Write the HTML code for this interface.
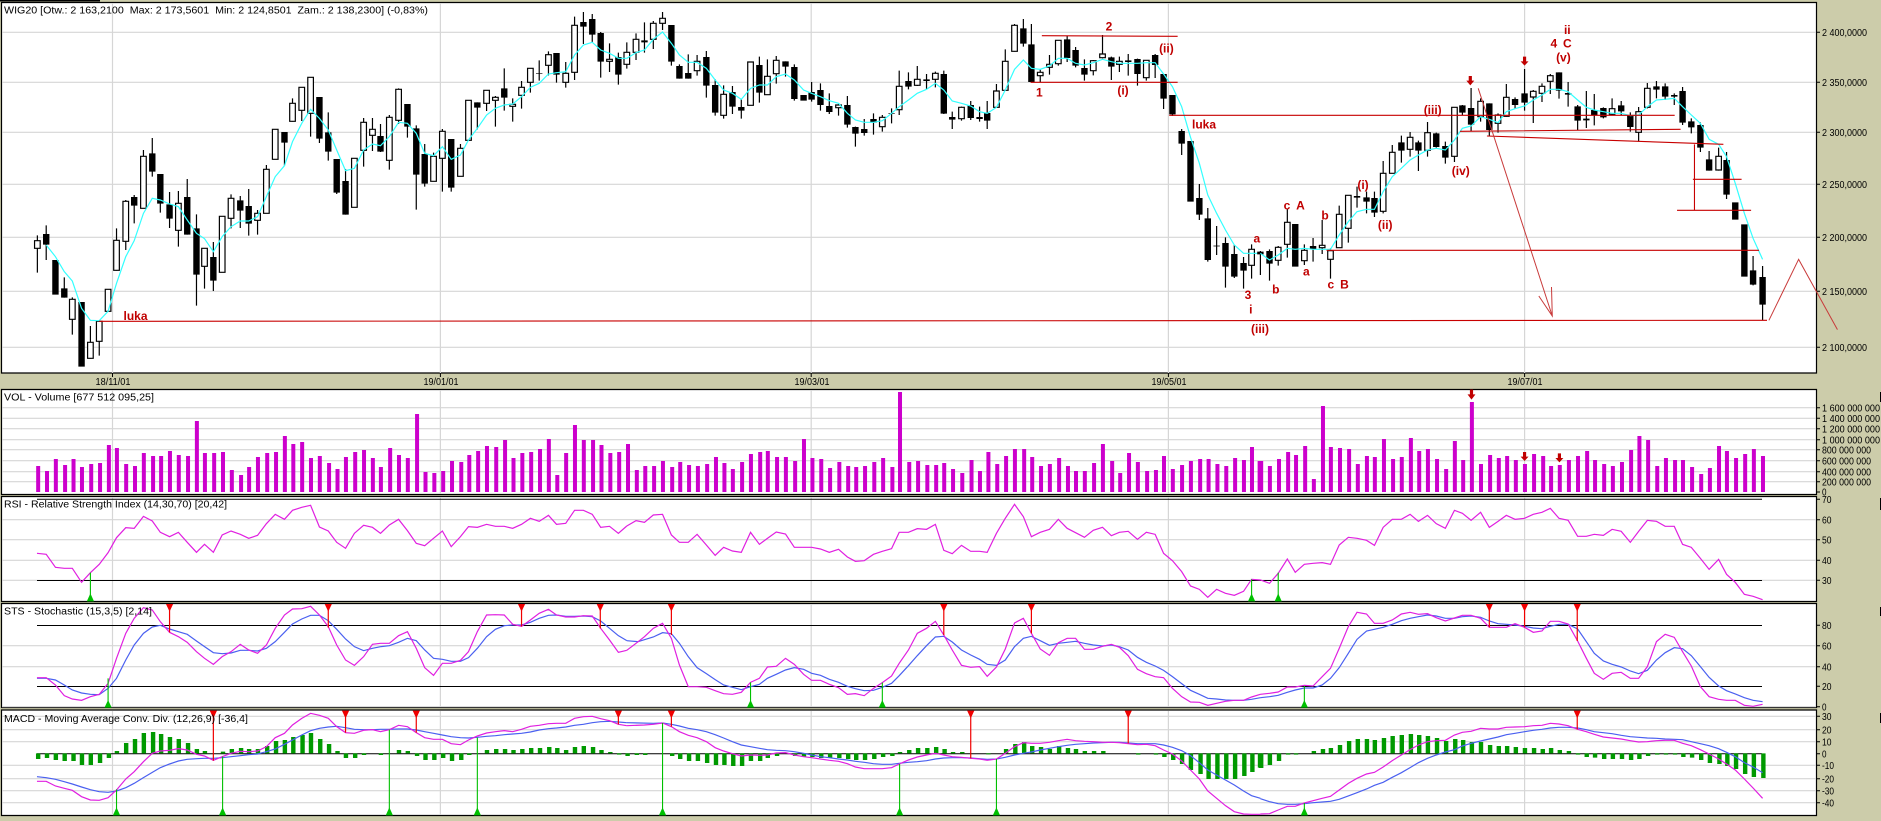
<!DOCTYPE html>
<html><head><meta charset="utf-8"><title>WIG20</title>
<style>
html,body{margin:0;padding:0;background:#ccccaa;width:1881px;height:821px;overflow:hidden}
svg{display:block;position:absolute;left:0;top:0}
text{font-family:"Liberation Sans",Arial,sans-serif;font-size:10px;fill:#000;white-space:pre}
.r text,text.r{font-size:12px;font-weight:bold;fill:#c00000;text-anchor:middle}
path,polyline,line,rect{vector-effect:non-scaling-stroke}
path,polyline{fill:none}
.w{stroke:#000;stroke-width:1.2}
.b{stroke:#000;stroke-width:6.4}
.o{fill:#fff;stroke:#000;stroke-width:1.2}
.m{stroke:#33ffff;stroke-width:1.2}
.v{stroke:#cc00cc;stroke-width:4}
.g{stroke:#009900;stroke-width:4.4}
.p{stroke:#e020e0;stroke-width:1.2}
.u{stroke:#4a60f0;stroke-width:1.2}
.sg{stroke:#00c000;stroke-width:1.1}
.sr{stroke:#f00000;stroke-width:1.2}
.tg{fill:#00c000}
.tr{fill:#f00000}
.ar{fill:#c00000}
.gr{stroke:#d6d6d6;stroke-width:1.2}
.bl{stroke:#000;stroke-width:1}
.rl{stroke:#c80000;stroke-width:1.1}
.ra{stroke:#c83a3a;stroke-width:1}
</style></head><body>
<svg width="1881" height="821" viewBox="0 0 1881 821" xmlns="http://www.w3.org/2000/svg">
<rect x="0" y="0" width="1881" height="821" fill="#ccccaa"/>
<rect x="0" y="0" width="100" height="1.5" fill="#000"/>
<rect x="1880" y="392" width="1" height="10" fill="#000"/>
<rect x="1880" y="498" width="1" height="12" fill="#000"/>
<rect x="1880" y="607" width="1" height="9" fill="#000"/>
<rect x="1880" y="713" width="1" height="10" fill="#000"/>
<g fill="#fff" stroke="#000" stroke-width="1.2">
<rect x="1.5" y="2.5" width="1815" height="370.5"/>
<rect x="1.5" y="389.5" width="1815" height="105"/>
<rect x="1.5" y="496.5" width="1815" height="105"/>
<rect x="1.5" y="603.5" width="1815" height="104"/>
<rect x="1.5" y="710" width="1815" height="105.5"/>
</g>
<path class="gr" d="M2 32.3H1816M2 82.3H1816M2 132.3H1816M2 184.3H1816M2 237.3H1816M2 291.3H1816M2 347.3H1816
M2 407.7H1816M2 418.3H1816M2 428.7H1816M2 439.7H1816M2 449.7H1816M2 460.7H1816M2 471.7H1816M2 481.7H1816
M2 519.7H1816M2 539.7H1816M2 560.3H1816M2 580.3H1816
M2 645.7H1816M2 666.7H1816M2 706.7H1816
M2 716.3H1816M2 729.7H1816M2 741.7H1816M2 765.3H1816M2 778.7H1816M2 790.7H1816M2 802.7H1816
M112.5 3V373M440.4 3V373M811.2 3V373M1168.4 3V373M1524.6 3V373
M112.5 390V494M440.4 390V494M811.2 390V494M1168.4 390V494M1524.6 390V494
M112.5 497V601M440.4 497V601M811.2 497V601M1168.4 497V601M1524.6 497V601
M112.5 604V707M440.4 604V707M811.2 604V707M1168.4 604V707M1524.6 604V707
M112.5 711V815M440.4 711V815M811.2 711V815M1168.4 711V815M1524.6 711V815"/>
<path class="bl" d="M37 499.3H1762M37 580.5H1762M37 625.5H1762M37 686.5H1762M37 753.7H1762"/>
<path class="bl" d="M1817 32.3h3M1817 82.3h3M1817 132.3h3M1817 184.3h3M1817 237.3h3M1817 291.3h3M1817 347.3h3M1817 407.7h3M1817 418.3h3M1817 428.7h3M1817 439.7h3M1817 449.7h3M1817 460.7h3M1817 471.7h3M1817 481.7h3M1817 492h3M1817 499.3h3M1817 519.7h3M1817 539.7h3M1817 560.3h3M1817 580.3h3M1817 625.3h3M1817 645.7h3M1817 666.7h3M1817 686.3h3M1817 706.7h3M1817 716.3h3M1817 729.7h3M1817 741.7h3M1817 753.7h3M1817 765.3h3M1817 778.7h3M1817 790.7h3M1817 802.7h3M112.5 373v4M440.4 373v4M811.2 373v4M1168.4 373v4M1524.6 373v4"/>

<!-- COLUMN 1 TOP -->
<g transform="scale(.4018,.33333)">
<path class="w" d="M93 706V818M115 676V780M160 832V893M180 892V1004M225 978V1076M247 962V1067M290 685V812M313 600V750M334 585V670M357 450V625M379 414V530M399 522V638M422 576V684M444 573V740M466 537V704M489 643V917M509 745V866M531 726V873M575 583V685M598 588V684M619 567V707M641 630V704M663 495V640M708 396V497M728 295V365M751 262V363M773 232V410M795 291V429M817 337V482M838 477V582M860 507V644M905 354V500M927 354V453M947 372V456M969 345V509M992 265V372M1014 312V413M1036 376V629M1057 432V560M1079 458V544M1101 387V575M1123 417V575M1146 432V529M1188 307V388M1211 270V333M1233 288V380M1255 205V332M1276 295V365M1298 243V326M1320 205V278M1342 181V242M1365 154V226M1385 159V248M1408 186V263M1430 50V240M1452 36V132M1474 42V128M1495 96V233M1517 130V216M1539 158V254M1560 127V206"/>
<path class="b" d="M115 702V734M138 780V884M160 865V893M203 906V1100M334 591V617M379 460V515M399 522V611M422 613V656M466 591V704M489 685V824M531 771V842M598 601V632M619 618V671M708 396V428M795 291V416M817 397V455M838 477V578M860 543V644M947 408V455M1014 312V380M1036 385V524M1057 462V551M1123 417V563M1188 307V323M1255 265V293M1385 159V224M1452 66V80M1474 57V104M1495 99V185M1539 171V224M1342 219V221"/>
<path class="o" d="M86 722h14V745h-14zM173 898h14V958h-14zM218 1027h14V1075h-14zM240 964h14V1024h-14zM262 868h14V934h-14zM283 721h14V811h-14zM306 604h14V724h-14zM350 469h14V625h-14zM437 610h14V691h-14zM502 745h14V799h-14zM546 649h14V817h-14zM568 595h14V655h-14zM634 640h14V661h-14zM656 508h14V640h-14zM678 388h14V478h-14zM721 310h14V364h-14zM744 262h14V331h-14zM766 232h14V340h-14zM875 475h14V622h-14zM898 367h14V451h-14zM920 388h14V406h-14zM962 352h14V481h-14zM985 268h14V361h-14zM1072 469h14V544h-14zM1094 394h14V475h-14zM1139 445h14V529h-14zM1159 301h14V421h-14zM1204 271h14V310h-14zM1226 292h14V301h-14zM1269 313h14V319h-14zM1291 262h14V286h-14zM1313 205h14V247h-14zM1358 164h14V196h-14zM1401 220h14V247h-14zM1423 76h14V217h-14zM1510 178h14V184h-14zM1553 157h14V193h-14z"/>
<polyline class="m" points="115,735 138,770 160,815 180,843 203,925 225,961 247,962 269,934 290,850 313,770 334,722 357,640 379,595 399,600 422,612 444,620 466,660 489,700 509,716 531,755 553,710 575,680 598,663 619,663 641,650 663,590 685,530 708,497 728,425 751,370 773,328 795,355 817,390 838,450 860,512 882,505 905,450 927,432 947,437 969,410 992,367 1014,370 1036,400 1057,460 1079,467 1101,440 1123,478 1146,465 1166,420 1188,385 1211,345 1233,325 1255,315 1276,312 1298,290 1320,262 1342,250 1365,222 1385,218 1408,215 1430,165 1452,135 1474,127 1495,150 1517,160 1539,175 1560,175"/>
</g>
<!-- COLUMN 2 TOP -->
<g transform="translate(630,0) scale(.4018,.33333)">
<path class="w" d="M15 100V180M36 67V158M58 63V147M81 36V90M103 75V197M123 193V236M145 163V236M167 165V227M190 153V293M212 238V347M233 256V356M255 258V342M277 296V356M322 170V308M342 178V284M364 168V251M387 184V230M409 193V302M452 246V305M474 250V332M496 280V342M519 312V347M541 288V383M561 380V440M583 357V407M606 340V404M628 345V395M651 325V370M670 212V345M693 217V268M715 198V258M738 222V268M760 215V262M781 212V342M802 335V387M825 320V362M848 303V360M870 320V365M889 303V387M912 252V323M934 148V272M957 72V155M979 57V140M999 72V246M1021 208V246M1044 165V224M1066 120V197M1088 108V186M1109 141V202M1131 178V242M1153 180V226M1176 105V175M1198 170V240M1218 170V216M1240 162V227M1263 176V257M1285 180V242M1307 162V234M1328 222V327M1350 285V348M1373 387V465M1417 552V660M1438 624V785M1460 678V765M1482 712V863M1504 735V834M1527 771V866M1547 733V836"/>
<path class="b" d="M36 121V127M103 75V185M123 198V236M145 219V236M190 171V257M212 255V338M255 276V320M277 321V332M322 195V278M387 184V200M409 201V297M432 285V302M452 276V299M474 270V315M496 318V336M541 315V374M561 381V401M583 387V399M606 357V368M651 340V342M693 243V260M738 238V243M781 222V341M802 351V359M848 315V354M870 351V357M889 339V362M979 85V131M999 133V246M1088 118V174M1109 150V197M1131 204V224M1198 172V200M1240 181V186M1263 177V222M1307 165V195M1328 222V296M1350 285V343M1373 393V431M1395 423V605M1417 594V644M1438 655V780M1460 737V739M1482 729V800M1504 762V830M1527 789V812"/>
<path class="o" d="M8 118h14V157h-14zM51 70h14V118h-14zM74 55h14V70h-14zM160 184h14V212h-14zM226 283h14V346h-14zM293 186h14V316h-14zM335 229h14V284h-14zM357 181h14V221h-14zM512 315h14V323h-14zM621 352h14V380h-14zM663 259h14V329h-14zM708 238h14V256h-14zM753 220h14V238h-14zM818 322h14V356h-14zM905 273h14V322h-14zM927 184h14V271h-14zM950 76h14V154h-14zM1014 217h14V227h-14zM1037 193h14V202h-14zM1059 121h14V191h-14zM1146 182h14V212h-14zM1169 162h14V173h-14zM1211 184h14V193h-14zM1278 181h14V233h-14zM1540 748h14V796h-14z"/>
<polyline class="m" points="-8,175 15,158 36,150 58,118 81,96 103,130 123,165 145,187 167,187 190,205 212,240 233,270 255,280 277,298 300,265 322,255 342,255 364,230 387,222 409,240 432,270 452,280 474,290 496,302 519,310 541,340 561,360 583,367 606,367 628,362 651,340 670,320 693,300 715,280 738,268 760,250 781,270 802,303 825,310 848,318 870,335 889,340 912,322 934,270 957,208 979,180 999,205 1021,208 1044,198 1066,175 1088,175 1109,190 1131,195 1153,188 1176,178 1198,185 1218,190 1240,190 1263,190 1285,188 1307,188 1328,222 1350,260 1373,320 1395,412 1417,490 1438,585 1460,640 1482,690 1504,735 1527,760 1547,760 1569,760"/>
</g>
<!-- COLUMN 3 TOP -->
<g transform="translate(1260,0) scale(.39605,.33333)">
<path class="w" d="M1 753V825M24 748V842M46 738V797M69 628V773M112 733V795M134 714V785M157 660V762M178 745V836M200 617V743M223 586V728M245 560V623M269 575V640M289 575V651M311 483V640M334 435V520M357 407V488M379 396V470M400 422V513M423 366V470M445 398V443M468 425V491M491 322V486M511 315V345M533 264V393M557 295V365M579 310V408M601 340V398M622 252V350M644 292V327M668 207V332M690 270V369M712 250V306M733 222V282M755 217V296M778 246V320M802 315V390M824 273V384M844 282V376M867 322V355M889 295V345M912 303V345M935 337V395M956 321V425M978 249V325M1001 243V295M1023 250V300M1046 280V315M1067 261V375M1089 355V400M1112 367V456M1134 453V512M1158 443V512M1178 456V597M1245 768V856M1269 798V960"/>
<path class="b" d="M1 755V763M24 753V791M89 672V800M134 738V747M245 588V593M269 592V605M289 594V638M357 427V452M400 427V452M445 400V441M468 438V473M511 316V338M533 324V374M579 310V390M644 297V315M668 280V308M755 217V272M778 279V284M802 319V362M824 356V361M844 330V345M867 324V352M912 316V334M935 346V381M1001 259V269M1023 259V290M1046 285V290M1067 273V368M1089 364V382M1112 375V443M1134 478V512M1178 480V584M1200 607V659M1223 673V830M1245 811V854M1269 831V914"/>
<path class="o" d="M39 742h14V781h-14zM62 667h14V733h-14zM105 751h14V782h-14zM150 736h14V743h-14zM171 752h14V778h-14zM193 643h14V743h-14zM216 586h14V685h-14zM304 520h14V634h-14zM327 457h14V520h-14zM372 412h14V448h-14zM416 398h14V451h-14zM484 322h14V469h-14zM550 304h14V350h-14zM594 345h14V370h-14zM615 292h14V349h-14zM683 274h14V291h-14zM705 259h14V280h-14zM726 227h14V244h-14zM882 326h14V343h-14zM949 335h14V397h-14zM971 265h14V322h-14zM1151 469h14V510h-14z"/>
<polyline class="m" points="1,760 24,780 46,765 69,745 89,748 112,745 134,748 157,748 178,748 200,705 223,665 245,635 269,628 289,628 311,575 334,530 357,505 379,480 400,465 423,450 445,445 468,450 491,420 511,385 533,378 557,350 579,358 601,368 622,335 644,326 668,318 690,300 712,285 733,268 755,268 778,275 802,300 824,322 844,330 867,335 889,340 912,340 935,347 956,345 978,320 1001,300 1023,298 1046,295 1067,320 1089,345 1112,370 1134,418 1158,433 1178,470 1200,550 1223,640 1245,715 1269,778"/>
<path class="rl" d="M168 751H1260M505 394L1062 388M573 408L1170 433M1097 433V631M1093 538H1216M1053 631H1240"/>
<path class="ra" d="M551 265L738 948M704 888L738 948L736 861M1285 961L1360 778L1458 989"/>
<path class="ar" d="M527 228h8v14h6l-10 14-10-14h6zM664 170h8v14h6l-10 13-10-13h6z"/>
</g>
<g transform="translate(630,0) scale(.4018,.33333)">
<path class="rl" d="M1025 107L1363 109M997 247H1363M1342 346H2600"/>
</g>
<path class="rl" d="M99 321.3L1767 320.3"/>

<!-- VOLUME -->
<g transform="translate(0,385) scale(.4018,.33333)">
<path class="v" d="M95 321V243M117 321V258M139 321V222M162 321V240M183 321V222M204 321V246M227 321V237M249 321V234M271 321V180M291 321V189M314 321V237M336 321V243M358 321V204M381 321V213M401 321V213M423 321V198M445 321V210M468 321V213M490 321V108M510 321V204M533 321V204M555 321V201M577 321V255M600 321V270M620 321V246M642 321V216M665 321V204M687 321V201M709 321V153M730 321V177M752 321V171M774 321V219M796 321V213M819 321V234M840 321V252M861 321V216M884 321V201M906 321V195M928 321V219M948 321V246M971 321V189M993 321V210M1015 321V219M1038 321V87M1059 321V261M1081 321V264M1103 321V258M1125 321V228M1148 321V231M1168 321V210M1190 321V198M1212 321V183M1235 321V186M1257 321V165M1278 321V219M1300 321V204M1322 321V201M1344 321V192M1366 321V162M1387 321V270M1409 321V204M1431 321V120M1453 321V165M1476 321V165M1497 321V180M1519 321V204M1541 321V201M1563 321V177"/>
<polyline class="p" points="92,505 115,508 138,547 160,550 180,550 203,592 225,563 247,538 269,503 290,458 313,428 334,430 357,394 379,408 399,442 422,455 444,442 466,472 489,502 509,478 531,502 553,450 575,438 598,448 619,460 641,451 663,416 685,388 708,403 728,376 751,367 773,361 795,426 817,438 838,472 860,490 882,445 905,421 927,427 947,445 969,420 992,403 1014,437 1036,475 1057,482 1079,460 1101,438 1123,485 1146,455 1166,425 1188,427 1211,418 1233,424 1255,424 1276,430 1298,418 1320,400 1342,409 1365,391 1385,418 1408,415 1430,376 1452,376 1474,388 1495,427 1517,424 1539,445 1560,423"/>
<path class="sg" d="M225 563V640"/><path class="tg" d="M225 625l9 24h-18z"/>
<polyline class="u" points="92,880 115,880 138,885 160,900 180,915 203,924 225,928 247,929 269,910 290,880 313,825 334,780 357,745 379,726 399,721 422,732 444,740 466,748 489,768 509,785 531,803 553,806 575,804 598,796 619,796 641,798 663,790 685,770 708,742 728,717 751,702 773,691 795,691 817,707 838,733 860,762 882,785 905,797 927,790 947,785 969,782 992,772 1014,760 1036,767 1057,795 1079,820 1101,823 1123,829 1146,829 1166,818 1188,790 1211,755 1233,733 1255,722 1276,720 1298,720 1320,712 1342,700 1365,691 1385,690 1408,694 1430,694 1452,693 1474,695 1495,708 1517,730 1539,752 1560,767"/>
<polyline class="p" points="92,878 115,878 138,900 160,932 180,942 203,946 225,935 247,928 269,895 290,820 313,745 334,700 357,668 379,675 399,710 422,742 444,755 466,772 489,800 509,820 531,838 553,815 575,800 598,778 619,795 641,805 663,780 685,730 708,690 728,672 751,671 773,664 795,690 817,725 838,780 860,825 882,841 905,815 927,778 947,775 969,775 992,752 1014,740 1036,790 1057,848 1079,871 1101,835 1123,835 1146,826 1166,800 1188,740 1211,690 1233,689 1255,690 1276,718 1298,724 1320,705 1342,685 1365,673 1385,690 1408,696 1430,696 1452,692 1474,693 1495,730 1517,765 1539,802 1560,796"/>
<path class="sg" d="M269 880V955"/><path class="tg" d="M269 945l9 23h-18z"/>
<path class="sr" d="M422 665V742M817 665V728M1298 665V724M1494 665V730"/>
<path class="tr" d="M413 657h18l-9 23zM808 657h18l-9 23zM1289 657h18l-9 23zM1485 657h18l-9 23z"/>
<path class="g" d="M95 1105V1122M117 1105V1119M139 1105V1125M161 1105V1128M183 1105V1128M204 1105V1140M226 1105V1140M249 1105V1134M271 1105V1119M291 1105V1098M314 1105V1074M336 1105V1062M358 1105V1044M381 1105V1041M401 1105V1047M423 1105V1056M445 1105V1062M468 1105V1074M490 1105V1092M510 1105V1098M555 1105V1100M577 1105V1092M600 1105V1089M620 1105V1092M642 1105V1092M665 1105V1083M687 1105V1068M709 1105V1065M730 1105V1056M753 1105V1050M774 1105V1044M797 1105V1062M819 1105V1077M840 1105V1098M861 1105V1119M884 1105V1119M906 1105V1110M948 1105V1110M993 1105V1095M1015 1105V1098M1038 1105V1113M1059 1105V1125M1081 1105V1125M1103 1105V1119M1125 1105V1128M1148 1105V1125M1168 1105V1110M1212 1105V1095M1235 1105V1092M1257 1105V1092M1278 1105V1095M1300 1105V1092M1322 1105V1089M1344 1105V1089M1367 1105V1086M1387 1105V1089M1409 1105V1095M1431 1105V1086M1453 1105V1083M1476 1105V1086M1497 1105V1095M1519 1105V1101M1541 1105V1109M1562 1105V1113"/>
<polyline class="u" points="92,1175 115,1178 138,1183 160,1190 180,1197 203,1206 225,1214 247,1220 269,1222 290,1218 313,1208 334,1195 357,1178 379,1162 399,1148 422,1137 444,1128 466,1123 489,1121 509,1120 531,1120 553,1118 575,1115 598,1112 619,1109 641,1107 663,1100 685,1092 708,1078 728,1065 751,1050 773,1037 795,1030 817,1026 838,1024 860,1028 882,1033 905,1034 927,1034 947,1033 969,1033 992,1032 1014,1032 1036,1035 1057,1040 1079,1045 1101,1050 1123,1055 1146,1058 1166,1059 1188,1057 1211,1054 1233,1052 1255,1049 1276,1047 1298,1045 1320,1041 1342,1035 1365,1031 1385,1029 1408,1026 1430,1021 1452,1018 1474,1013 1495,1010 1517,1009 1539,1011 1560,1013"/>
<polyline class="p" points="92,1189 115,1189 138,1203 160,1210 180,1216 203,1235 225,1245 247,1246 269,1238 290,1215 313,1182 334,1160 357,1130 379,1105 399,1098 422,1096 444,1091 466,1095 489,1108 509,1113 531,1126 553,1115 575,1105 598,1099 619,1100 641,1098 663,1085 685,1058 708,1045 728,1020 751,1000 773,985 795,991 817,1000 838,1025 860,1043 882,1045 905,1036 927,1034 947,1040 969,1034 992,1021 1014,1025 1036,1043 1057,1058 1079,1063 1101,1063 1123,1076 1146,1079 1166,1065 1188,1053 1211,1044 1233,1040 1255,1037 1276,1040 1298,1033 1320,1024 1342,1021 1365,1016 1385,1015 1408,1015 1430,1000 1452,995 1474,994 1495,1001 1517,1007 1539,1018 1560,1022"/>
<path class="sg" d="M290 1213V1280M554 1115V1280M969 1034V1280M1188 1058V1280"/>
<path class="tg" d="M290 1267l9 24h-18zM554 1267l9 24h-18zM969 1267l9 24h-18zM1188 1267l9 24h-18z"/>
<path class="sr" d="M531 985V1127M860 985V1043M1036 985V1043M1539 985V1018"/>
<path class="tr" d="M522 977h18l-9 23zM851 977h18l-9 23zM1027 977h18l-9 23zM1530 977h18l-9 23z"/>
</g>
<!-- COLUMN 2 BOTTOM -->
<g transform="translate(630,385) scale(.4018,.33333)">
<path class="v" d="M17 321V255M38 321V243M60 321V243M82 321V228M105 321V246M125 321V231M147 321V240M169 321V243M192 321V237M214 321V216M235 321V234M256 321V252M279 321V231M301 321V207M324 321V201M343 321V198M366 321V216M388 321V216M411 321V228M433 321V162M454 321V219M476 321V222M498 321V249M521 321V231M543 321V243M563 321V246M585 321V243M608 321V231M630 321V219M653 321V246M672 321V21M695 321V231M717 321V228M740 321V240M762 321V240M782 321V234M804 321V252M827 321V264M850 321V225M871 321V258M892 321V201M914 321V237M936 321V213M958 321V192M981 321V192M1001 321V216M1023 321V243M1045 321V237M1068 321V219M1090 321V243M1110 321V258M1132 321V258M1155 321V234M1177 321V177M1200 321V228M1220 321V264M1242 321V204M1264 321V231M1287 321V258M1309 321V255M1329 321V213M1351 321V252M1374 321V240M1396 321V228M1419 321V222M1440 321V222M1462 321V237M1484 321V243M1506 321V219M1528 321V225M1548 321V186M1567 321V228"/>
<polyline class="p" points="-8,423 15,407 36,412 58,390 81,388 103,450 123,472 145,472 167,448 190,480 212,511 233,487 255,498 277,502 300,442 322,478 342,460 364,441 387,447 409,487 432,487 452,487 474,492 496,502 519,493 541,516 561,529 583,527 606,508 628,499 651,491 670,442 693,442 715,431 738,433 760,418 781,496 802,506 825,481 848,499 870,499 889,502 912,445 934,400 957,358 979,395 999,455 1021,442 1044,433 1066,403 1088,430 1109,443 1131,457 1153,436 1176,427 1198,452 1218,442 1240,439 1263,463 1285,442 1307,448 1328,505 1350,527 1373,560 1395,603 1417,613 1438,637 1460,613 1482,625 1504,631 1527,619 1547,583 1569,585"/>
<path class="sg" d="M1547 583V640"/><path class="tg" d="M1547 625l9 24h-18z"/>
<polyline class="u" points="-8,767 20,770 58,756 81,743 103,746 123,775 145,815 167,848 190,866 212,884 233,900 255,907 277,914 300,905 322,898 342,880 364,868 387,855 409,848 432,853 452,865 474,871 496,883 519,892 541,904 561,911 583,917 606,916 628,907 651,895 670,872 693,842 715,812 738,782 760,756 781,754 802,771 825,795 848,810 870,823 889,838 912,841 934,825 957,785 979,760 999,754 1021,767 1044,781 1066,775 1088,772 1109,769 1131,775 1153,780 1176,783 1198,780 1218,785 1240,795 1263,817 1285,832 1307,843 1328,856 1350,875 1373,896 1395,916 1417,928 1438,940 1460,942 1482,945 1504,946 1527,946 1547,943 1569,938"/>
<polyline class="p" points="-8,796 15,775 36,755 58,730 81,715 103,760 123,840 145,905 167,905 190,907 212,917 233,926 255,928 277,922 300,892 322,880 342,846 364,844 387,820 409,838 432,868 452,886 474,886 496,898 519,908 541,928 561,926 583,932 606,910 628,893 651,873 670,835 693,795 715,745 738,730 760,709 781,750 802,795 825,841 848,847 870,845 889,874 912,846 934,792 957,714 979,700 999,745 1021,792 1044,811 1066,773 1088,760 1109,760 1131,793 1153,793 1176,784 1198,778 1218,787 1240,812 1263,853 1285,866 1307,875 1328,878 1350,910 1373,935 1395,951 1417,952 1438,961 1460,955 1482,949 1504,946 1527,946 1547,936 1569,928"/>
<path class="sg" d="M300 892V955M628 893V955"/><path class="tg" d="M300 945l9 23h-18zM628 945l9 23h-18z"/>
<path class="sr" d="M103 665V750M781 665V750M999 665V745"/>
<path class="tr" d="M94 657h18l-9 23zM772 657h18l-9 23zM990 657h18l-9 23z"/>
<path class="g" d="M17 1105V1110M38 1105V1110M105 1105V1113M125 1105V1122M147 1105V1128M169 1105V1128M192 1105V1134M214 1105V1140M235 1105V1140M257 1105V1143M279 1105V1143M301 1105V1128M324 1105V1128M343 1105V1119M366 1105V1113M411 1105V1113M433 1105V1116M454 1105V1116M476 1105V1119M498 1105V1119M521 1105V1119M543 1105V1122M563 1105V1125M585 1105V1125M608 1105V1122M630 1105V1116M653 1105V1113M672 1105V1101M695 1105V1095M717 1105V1089M740 1105V1089M762 1105V1086M783 1105V1092M804 1105V1101M827 1105V1101M892 1105V1108M936 1105V1092M959 1105V1077M981 1105V1071M1001 1105V1083M1023 1105V1086M1045 1105V1092M1068 1105V1083M1090 1105V1089M1110 1105V1092M1132 1105V1098M1155 1105V1098M1178 1105V1098M1265 1105V1109M1309 1105V1109M1330 1105V1116M1352 1105V1125M1374 1105V1137M1396 1105V1155M1420 1105V1167M1440 1105V1182M1462 1105V1182M1484 1105V1182M1506 1105V1182M1529 1105V1173M1549 1105V1161M1568 1105V1148"/>
<polyline class="u" points="-8,1013 58,1015 81,1014 103,1018 123,1023 145,1030 167,1034 190,1040 212,1049 233,1059 255,1070 277,1080 300,1085 322,1090 342,1094 364,1096 387,1097 409,1100 432,1105 452,1110 474,1115 496,1118 519,1122 541,1125 561,1129 583,1132 606,1136 628,1138 651,1138 670,1135 693,1132 715,1130 738,1127 760,1122 781,1119 802,1118 825,1118 848,1119 870,1121 889,1123 912,1122 934,1117 957,1110 979,1105 999,1101 1021,1095 1044,1090 1066,1085 1088,1081 1109,1078 1131,1076 1153,1074 1176,1073 1198,1072 1218,1072 1240,1074 1263,1076 1285,1076 1307,1076 1328,1080 1350,1087 1373,1097 1395,1112 1417,1133 1438,1155 1460,1170 1482,1185 1504,1200 1527,1218 1547,1232 1569,1240"/>
<polyline class="p" points="-8,1022 36,1020 58,1018 81,1014 103,1025 123,1040 145,1051 167,1058 190,1070 212,1088 233,1098 255,1106 277,1113 300,1110 322,1111 342,1110 364,1104 387,1103 409,1110 432,1115 452,1118 474,1122 496,1126 519,1129 541,1136 561,1146 583,1151 606,1151 628,1151 651,1148 670,1137 693,1125 715,1116 738,1110 760,1105 781,1110 802,1115 825,1117 848,1120 870,1122 889,1126 912,1122 934,1105 957,1085 979,1073 999,1075 1021,1075 1044,1072 1066,1067 1088,1063 1109,1067 1131,1069 1153,1070 1176,1072 1198,1072 1218,1073 1240,1076 1263,1079 1285,1078 1307,1082 1328,1095 1350,1107 1373,1128 1395,1155 1417,1182 1438,1218 1460,1240 1482,1262 1504,1280 1527,1287 1547,1288 1569,1288"/>
<path class="sg" d="M81 1014V1280M671 1137V1280M912 1122V1280"/>
<path class="tg" d="M81 1267l9 24h-18zM671 1267l9 24h-18zM912 1267l9 24h-18z"/>
<path class="sr" d="M103 985V1025M848 985V1120M1240 985V1075"/>
<path class="tr" d="M94 977h18l-9 23zM839 977h18l-9 23zM1231 977h18l-9 23z"/>
</g>
<!-- COLUMN 3 BOTTOM -->
<g transform="translate(1260,385) scale(.39605,.33333)">
<path class="v" d="M3 321V228M25 321V243M48 321V222M71 321V201M91 321V210M114 321V183M136 321V282M159 321V63M179 321V186M202 321V189M225 321V192M247 321V237M270 321V213M290 321V216M313 321V162M336 321V222M358 321V216M381 321V159M402 321V198M424 321V192M447 321V222M470 321V252M492 321V168M513 321V225M535 321V51M558 321V237M581 321V210M603 321V219M624 321V213M646 321V225M669 321V237M692 321V207M715 321V213M735 321V243M757 321V240M780 321V225M803 321V213M826 321V198M846 321V225M869 321V237M891 321V243M914 321V231M937 321V195M958 321V153M980 321V165M1003 321V243M1025 321V219M1048 321V225M1068 321V225M1091 321V246M1114 321V267M1136 321V249M1159 321V183M1179 321V198M1202 321V219M1225 321V207M1247 321V192M1270 321V213"/>
<path class="ar" d="M530 14h8v14h6l-10 16-10-16h6zM664 201h8v14h6l-10 13-10-13h6zM752 205h8v14h6l-10 13-10-13h6z"/>
<polyline class="p" points="1,585 24,595 46,565 69,522 89,562 112,538 134,535 157,533 178,538 200,480 223,457 245,460 269,466 289,481 311,427 334,403 357,403 379,388 400,409 423,391 445,416 468,430 491,376 511,385 533,406 557,382 579,427 601,409 622,391 644,403 668,400 690,388 712,382 733,370 755,400 778,406 802,454 824,454 844,448 867,451 889,433 912,439 935,472 956,439 978,406 1001,409 1023,424 1046,424 1067,478 1089,487 1112,520 1134,553 1158,523 1178,568 1200,592 1223,628 1245,634 1269,644"/>
<path class="sg" d="M46 563V640"/><path class="tg" d="M46 625l9 24h-18z"/>
<polyline class="u" points="1,938 24,935 46,931 69,922 89,915 112,909 134,909 157,900 178,880 200,848 223,805 245,763 269,738 289,733 311,727 334,718 357,707 379,700 400,695 423,690 445,693 468,700 491,700 511,695 533,693 557,697 579,708 601,716 622,718 644,720 668,724 690,729 712,731 733,724 755,718 778,718 802,732 824,770 844,805 867,828 889,838 912,846 935,858 956,866 978,856 1001,825 1023,803 1046,788 1067,791 1089,812 1112,845 1134,877 1158,903 1178,917 1200,927 1223,938 1245,946 1269,950"/>
<polyline class="p" points="1,928 24,925 46,921 69,906 89,906 112,901 134,903 157,875 178,850 200,790 223,725 245,682 269,687 289,715 311,715 334,705 357,687 379,682 400,688 423,686 445,698 468,708 491,699 511,691 533,691 557,700 579,727 601,727 622,727 644,716 668,727 690,742 712,738 733,709 755,709 778,717 802,768 824,820 844,865 867,883 889,865 912,862 935,880 956,880 978,845 1001,770 1023,748 1046,757 1067,800 1089,843 1112,905 1134,935 1158,943 1178,946 1200,946 1223,961 1245,964 1269,958"/>
<path class="sg" d="M112 903V955"/><path class="tg" d="M112 945l9 23h-18z"/>
<path class="sr" d="M579 665V727M668 665V727M801 665V768"/>
<path class="tr" d="M570 657h18l-9 23zM659 657h18l-9 23zM792 657h18l-9 23z"/>
<path class="g" d="M3 1105V1149M25 1105V1140M48 1105V1128M71 1105V1109M91 1105V1109M136 1105V1098M159 1105V1092M179 1105V1089M202 1105V1080M225 1105V1068M247 1105V1062M270 1105V1062M290 1105V1065M313 1105V1059M335 1105V1053M358 1105V1050M381 1105V1047M402 1105V1050M424 1105V1053M447 1105V1059M470 1105V1068M493 1105V1062M513 1105V1065M535 1105V1071M558 1105V1071M581 1105V1080M603 1105V1083M624 1105V1083M646 1105V1086M669 1105V1089M692 1105V1089M714 1105V1092M735 1105V1089M757 1105V1095M780 1105V1098M803 1105V1109M825 1105V1116M846 1105V1118M869 1105V1122M891 1105V1122M914 1105V1122M937 1105V1125M958 1105V1122M980 1105V1113M1003 1105V1109M1025 1105V1109M1048 1105V1109M1069 1105V1116M1091 1105V1118M1114 1105V1125M1136 1105V1134M1160 1105V1137M1180 1105V1143M1202 1105V1152M1225 1105V1167M1247 1105V1176M1271 1105V1179"/>
<polyline class="u" points="1,1241 24,1250 46,1256 69,1258 89,1258 112,1256 134,1253 157,1251 178,1249 200,1243 223,1233 245,1223 269,1212 289,1201 311,1192 334,1177 357,1163 379,1148 400,1133 423,1120 445,1110 468,1101 491,1094 511,1083 533,1075 557,1068 579,1062 601,1056 622,1049 644,1045 668,1040 690,1036 712,1033 733,1029 755,1027 778,1027 802,1029 824,1034 844,1040 867,1043 889,1046 912,1051 935,1055 956,1057 978,1059 1001,1060 1023,1062 1046,1063 1067,1064 1089,1070 1112,1076 1134,1082 1158,1091 1178,1102 1200,1115 1223,1133 1245,1146 1269,1163"/>
<polyline class="p" points="1,1287 24,1286 46,1275 69,1264 89,1264 112,1254 134,1247 157,1240 178,1234 200,1215 223,1195 245,1180 269,1167 289,1162 311,1146 334,1127 357,1110 379,1094 400,1080 423,1070 445,1067 468,1066 491,1050 511,1042 533,1039 557,1030 579,1032 601,1032 622,1027 644,1026 668,1025 690,1022 712,1021 733,1015 755,1017 778,1022 802,1033 824,1040 844,1048 867,1056 889,1059 912,1062 935,1067 956,1071 978,1070 1001,1067 1023,1066 1046,1066 1067,1075 1089,1082 1112,1094 1134,1107 1158,1122 1178,1137 1200,1155 1223,1182 1245,1209 1269,1240"/>
<path class="sg" d="M112 1254V1280"/><path class="tg" d="M112 1267l9 24h-18z"/>
<path class="sr" d="M801 985V1033"/><path class="tr" d="M792 977h18l-9 23z"/>
</g>

<!-- ANNOTATIONS -->
<g class="r">
<text x="135.5" y="320">luka</text>
<text x="1204" y="128.3">luka</text>
<text x="1109" y="30.7">2</text>
<text x="1166.4" y="52.3">(ii)</text>
<text x="1039.4" y="96.7">1</text>
<text x="1123" y="94.3">(i)</text>
<text x="1248" y="299">3</text>
<text x="1250.8" y="313.7">i</text>
<text x="1260" y="333">(iii)</text>
<text x="1256.8" y="242.3">a</text>
<text x="1567.3" y="34">ii</text>
<text x="1553.9" y="47.7">4</text>
<text x="1567.3" y="47.7">C</text>
<text x="1563.4" y="61.3">(v)</text>
<text x="1432.7" y="114">(iii)</text>
<text x="1460.8" y="175">(iv)</text>
<text x="1363" y="189">(i)</text>
<text x="1385.2" y="229">(ii)</text>
<text x="1287" y="209.7">c</text>
<text x="1300.4" y="209.7">A</text>
<text x="1325" y="219.7">b</text>
<text x="1306.3" y="275.7">a</text>
<text x="1275.8" y="293.7">b</text>
<text x="1330.9" y="288.7">c</text>
<text x="1344.4" y="288.7">B</text>
</g>

<!-- PANEL LABELS -->
<text x="4" y="13.5" textLength="424" lengthAdjust="spacingAndGlyphs">WIG20 [Otw.: 2 163,2100  Max: 2 173,5601  Min: 2 124,8501  Zam.: 2 138,2300] (-0,83%)</text>
<text x="4" y="400.7" textLength="150" lengthAdjust="spacingAndGlyphs">VOL - Volume [677 512 095,25]</text>
<text x="4" y="507.7" textLength="223" lengthAdjust="spacingAndGlyphs">RSI - Relative Strength Index (14,30,70) [20,42]</text>
<text x="4" y="614.7" textLength="148" lengthAdjust="spacingAndGlyphs">STS - Stochastic (15,3,5) [2,14]</text>
<text x="4" y="722" textLength="244" lengthAdjust="spacingAndGlyphs">MACD - Moving Average Conv. Div. (12,26,9) [-36,4]</text>

<!-- DATES -->
<g text-anchor="middle">
<text x="113" y="385" textLength="35" lengthAdjust="spacingAndGlyphs">18/11/01</text>
<text x="441" y="385" textLength="35" lengthAdjust="spacingAndGlyphs">19/01/01</text>
<text x="812" y="385" textLength="35" lengthAdjust="spacingAndGlyphs">19/03/01</text>
<text x="1169" y="385" textLength="35" lengthAdjust="spacingAndGlyphs">19/05/01</text>
<text x="1525" y="385" textLength="35" lengthAdjust="spacingAndGlyphs">19/07/01</text>
</g>

<!-- AXES -->
<g>
<text x="1822" y="36" textLength="45" lengthAdjust="spacingAndGlyphs">2 400,0000</text>
<text x="1822" y="86" textLength="45" lengthAdjust="spacingAndGlyphs">2 350,0000</text>
<text x="1822" y="136" textLength="45" lengthAdjust="spacingAndGlyphs">2 300,0000</text>
<text x="1822" y="188" textLength="45" lengthAdjust="spacingAndGlyphs">2 250,0000</text>
<text x="1822" y="241" textLength="45" lengthAdjust="spacingAndGlyphs">2 200,0000</text>
<text x="1822" y="295" textLength="45" lengthAdjust="spacingAndGlyphs">2 150,0000</text>
<text x="1822" y="351" textLength="45" lengthAdjust="spacingAndGlyphs">2 100,0000</text>
<text x="1822" y="411.4" textLength="58" lengthAdjust="spacingAndGlyphs">1 600 000 000</text>
<text x="1822" y="422" textLength="58" lengthAdjust="spacingAndGlyphs">1 400 000 000</text>
<text x="1822" y="432.4" textLength="58" lengthAdjust="spacingAndGlyphs">1 200 000 000</text>
<text x="1822" y="443.4" textLength="58" lengthAdjust="spacingAndGlyphs">1 000 000 000</text>
<text x="1822" y="453.4" textLength="49" lengthAdjust="spacingAndGlyphs">800 000 000</text>
<text x="1822" y="464.4" textLength="49" lengthAdjust="spacingAndGlyphs">600 000 000</text>
<text x="1822" y="475.4" textLength="49" lengthAdjust="spacingAndGlyphs">400 000 000</text>
<text x="1822" y="485.4" textLength="49" lengthAdjust="spacingAndGlyphs">200 000 000</text>
<text x="1822" y="495.7" textLength="4.5" lengthAdjust="spacingAndGlyphs">0</text>
<text x="1822" y="503" textLength="9.5" lengthAdjust="spacingAndGlyphs">70</text>
<text x="1822" y="523.4" textLength="9.5" lengthAdjust="spacingAndGlyphs">60</text>
<text x="1822" y="543.4" textLength="9.5" lengthAdjust="spacingAndGlyphs">50</text>
<text x="1822" y="564" textLength="9.5" lengthAdjust="spacingAndGlyphs">40</text>
<text x="1822" y="584" textLength="9.5" lengthAdjust="spacingAndGlyphs">30</text>
<text x="1822" y="629" textLength="9.5" lengthAdjust="spacingAndGlyphs">80</text>
<text x="1822" y="649.4" textLength="9.5" lengthAdjust="spacingAndGlyphs">60</text>
<text x="1822" y="670.4" textLength="9.5" lengthAdjust="spacingAndGlyphs">40</text>
<text x="1822" y="690" textLength="9.5" lengthAdjust="spacingAndGlyphs">20</text>
<text x="1822" y="710.4" textLength="4.5" lengthAdjust="spacingAndGlyphs">0</text>
<text x="1822" y="720" textLength="9.5" lengthAdjust="spacingAndGlyphs">30</text>
<text x="1822" y="733.4" textLength="9.5" lengthAdjust="spacingAndGlyphs">20</text>
<text x="1822" y="745.4" textLength="9.5" lengthAdjust="spacingAndGlyphs">10</text>
<text x="1822" y="757.4" textLength="4.5" lengthAdjust="spacingAndGlyphs">0</text>
<text x="1822" y="769" textLength="12" lengthAdjust="spacingAndGlyphs">-10</text>
<text x="1822" y="782.4" textLength="12" lengthAdjust="spacingAndGlyphs">-20</text>
<text x="1822" y="794.4" textLength="12" lengthAdjust="spacingAndGlyphs">-30</text>
<text x="1822" y="806.4" textLength="12" lengthAdjust="spacingAndGlyphs">-40</text>
</g>
</svg>
</body></html>
